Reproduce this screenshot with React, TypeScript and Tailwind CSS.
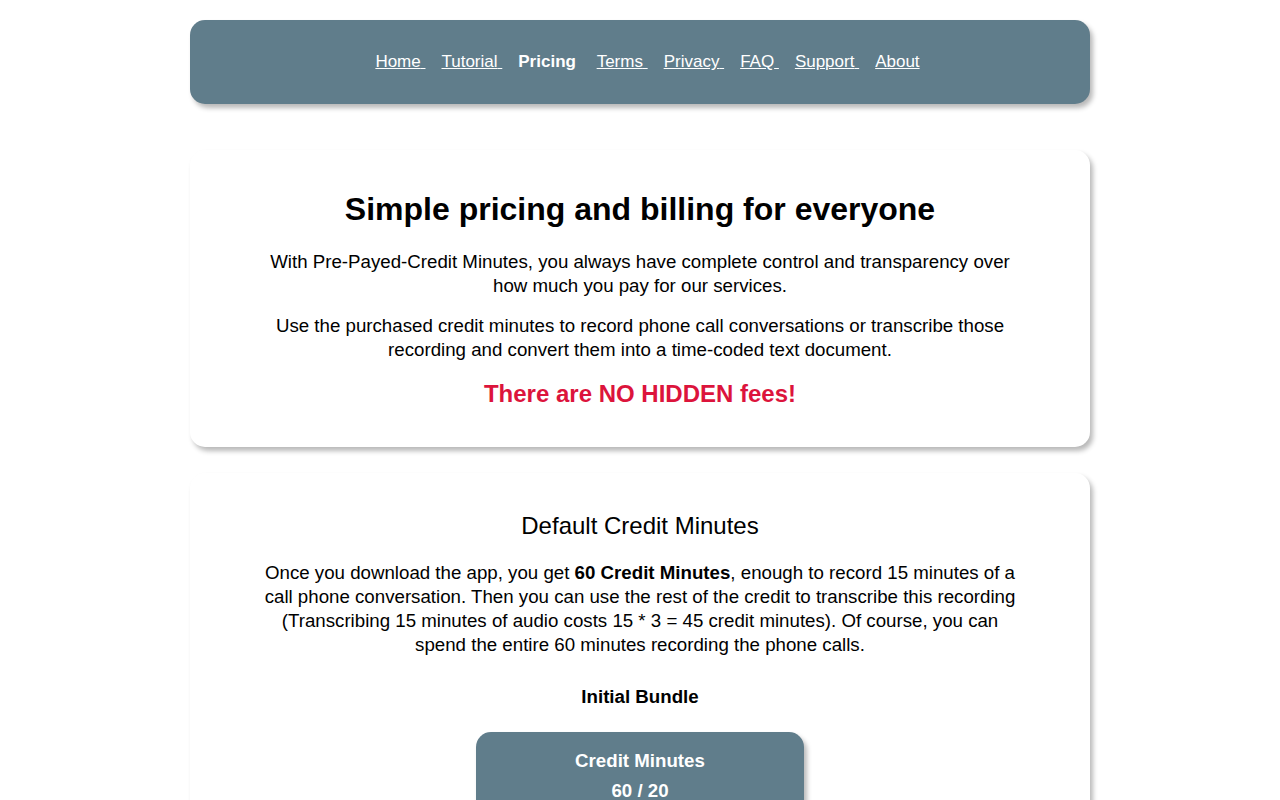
const navLinks = [
  { label: 'Home', active: false },
  { label: 'Tutorial', active: false },
  { label: 'Pricing', active: true },
  { label: 'Terms', active: false },
  { label: 'Privacy', active: false },
  { label: 'FAQ', active: false },
  { label: 'Support', active: false },
  { label: 'About', active: false },
];

export default function App() {
  return (
    <div className="min-h-screen bg-white pt-5 text-black" style={{ fontFamily: '"Liberation Sans", Arial, sans-serif' }}>
      {/* top nav */}
      <nav className="mx-auto flex h-[84px] w-[900px] items-center justify-center gap-4 rounded-[15px] bg-[#607d8b] pl-[15px] shadow-[3px_4px_5px_rgba(0,0,0,0.28)]">
        {navLinks.map((link, i) =>
          link.active ? (
            <span key={link.label} className="text-[17px] font-bold text-white">
              {link.label}{'\u00a0'}
            </span>
          ) : (
            <a key={link.label} href="#" className="text-[17px] text-white underline">
              {link.label}{i < navLinks.length - 1 ? '\u00a0' : ''}
            </a>
          )
        )}
      </nav>

      {/* intro card */}
      <section className="mx-auto mt-[46px] flex w-[900px] flex-col items-center rounded-[15px] bg-white px-5 pb-[39px] pt-[41px] text-center shadow-[3px_4px_5px_rgba(0,0,0,0.28)]">
        <h1 className="text-[32px] font-bold leading-[37px]">Simple pricing and billing for everyone</h1>
        <p className="mt-[22px] max-w-[765px] text-[18.7px] leading-[24px]">
          With Pre-Payed-Credit Minutes, you always have complete control and transparency over how much you pay for our services.
        </p>
        <p className="mt-4 max-w-[765px] text-[18.7px] leading-[24px]">
          Use the purchased credit minutes to record phone call conversations or transcribe those recording and convert them into a time-coded text document.
        </p>
        <h2 className="mt-[18px] text-[24px] font-bold leading-[28px] text-[#dc143c]">There are NO HIDDEN fees!</h2>
      </section>

      {/* default credit card */}
      <section className="mx-auto mt-[26px] flex w-[900px] flex-col items-center rounded-[15px] bg-white px-5 pb-10 pt-[39px] text-center shadow-[3px_4px_5px_rgba(0,0,0,0.28)]">
        <h2 className="text-[24px] leading-[28px]">Default Credit Minutes</h2>
        <p className="mt-[21px] max-w-[765px] text-[18.7px] leading-[24px]">
          Once you download the app, you get <b>60 Credit Minutes</b>, enough to record 15 minutes of a call phone conversation. Then you can use the rest of the credit to transcribe this recording (Transcribing 15 minutes of audio costs 15 * 3 = 45 credit minutes). Of course, you can spend the entire 60 minutes recording the phone calls.
        </p>
        <h3 className="mt-7 text-[18.7px] font-bold leading-[24px]">Initial Bundle</h3>
        <div className="mt-[23px] flex w-[328px] flex-col items-center rounded-[15px] bg-[#607d8b] pb-5 pt-[14px] font-bold text-white shadow-[3px_4px_5px_rgba(0,0,0,0.28)]">
          <div className="text-[18.7px] leading-[30px]">Credit Minutes</div>
          <div className="text-[18.7px] leading-[30px]">60 / 20</div>
        </div>
      </section>
    </div>
  );
}
